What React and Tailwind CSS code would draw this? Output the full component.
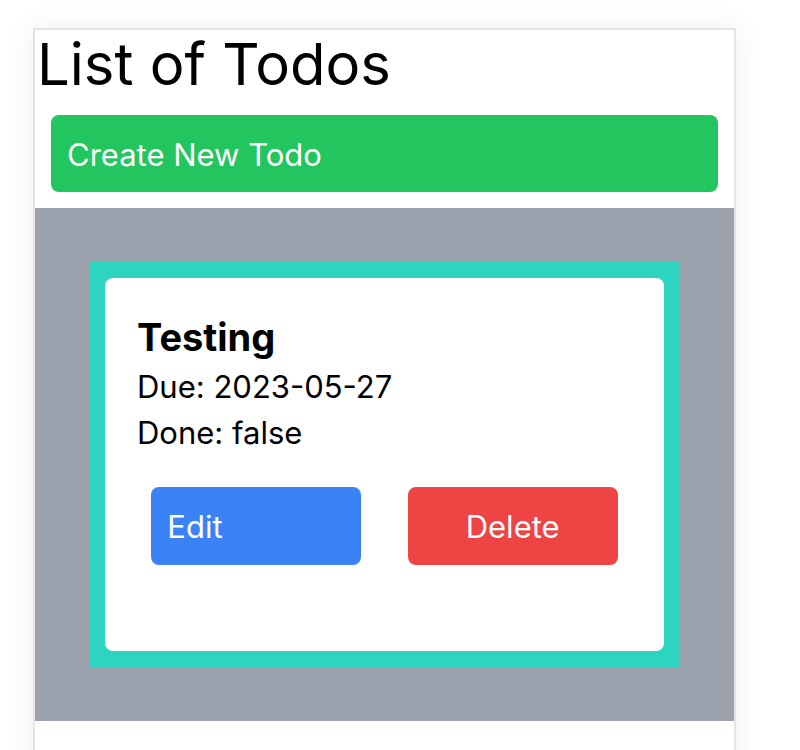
import React from 'react'

const todos = [{ id: 1, title: 'Testing', due: '2023-05-27', done: false }]

function TodoCard({ todo }) {
  return (
    <div className="bg-[#2dd4bf] p-[16px]">
      <div className="bg-white rounded-lg pt-[32px] px-[32px] pb-[86px]">
        <h2 className="text-[38px] leading-[54px] font-bold text-black">{todo.title}</h2>
        <p className="text-[31px] leading-[46px] text-black">Due: {todo.due}</p>
        <p className="text-[31px] leading-[46px] text-black">Done: {String(todo.done)}</p>
        <div className="flex justify-evenly mt-[31px] -mx-[32px]">
          <button className="w-[210px] h-[78px] rounded-lg bg-[#3b82f6] text-white text-[31px] text-left px-[16px] pt-[3px]">
            Edit
          </button>
          <button className="w-[210px] h-[78px] rounded-lg bg-[#ef4444] text-white text-[31px] text-center pt-[3px]">
            Delete
          </button>
        </div>
      </div>
    </div>
  )
}

export default function App() {
  return (
    <div className="min-h-screen bg-white pt-[28px] pl-[33px] font-['Inter',sans-serif] overflow-hidden">
      <div className="w-[703px] min-h-[760px] border-2 border-[#e5e5e5] bg-white shadow-[0_0_28px_rgba(0,0,0,0.07)]">
        <h1 className="text-[58px] leading-[68px] text-black pl-[2px]">List of Todos</h1>
        <div className="px-[16px] pt-[17px] pb-[16px]">
          <button className="w-full h-[77px] rounded-lg bg-[#22c55e] text-white text-[31px] text-left px-[16px] pt-[3px]">
            Create New Todo
          </button>
        </div>
        <div className="bg-[#9ca3af] p-[54px]">
          {todos.map((t) => (
            <TodoCard key={t.id} todo={t} />
          ))}
        </div>
      </div>
    </div>
  )
}
